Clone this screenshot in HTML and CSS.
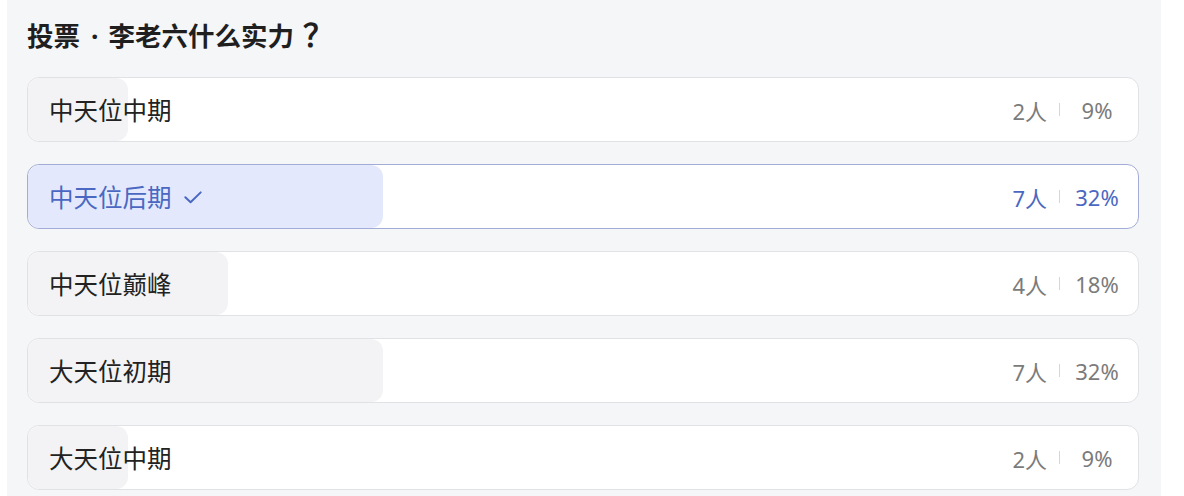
FILE: index.html
```html
<!DOCTYPE html>
<html lang="zh-CN">
<head>
<meta charset="utf-8">
<link rel="stylesheet" href="styles.css">
</head>
<body>
<div class="card">
  <h1 class="title">投票<span class="dot">·</span>李老六什么实力<span class="qm">？</span></h1>
  <div class="options">
    <div class="option">
      <div class="fill" style="width:9%"></div>
      <span class="label">中天位中期</span>
      <span class="stats"><span class="count">2人</span><span class="sep"></span><span class="pct">9%</span></span>
    </div>
    <div class="option selected">
      <div class="fill" style="width:32%"></div>
      <span class="label">中天位后期<svg class="check" viewBox="0 0 20 20" width="22" height="22"><path d="M3 10.2 L7.8 14.8 L17 5.8" fill="none" stroke="currentColor" stroke-width="1.8" stroke-linecap="round" stroke-linejoin="round"/></svg></span>
      <span class="stats"><span class="count">7人</span><span class="sep"></span><span class="pct">32%</span></span>
    </div>
    <div class="option">
      <div class="fill" style="width:18%"></div>
      <span class="label">中天位巅峰</span>
      <span class="stats"><span class="count">4人</span><span class="sep"></span><span class="pct">18%</span></span>
    </div>
    <div class="option">
      <div class="fill" style="width:32%"></div>
      <span class="label">大天位初期</span>
      <span class="stats"><span class="count">7人</span><span class="sep"></span><span class="pct">32%</span></span>
    </div>
    <div class="option">
      <div class="fill" style="width:9%"></div>
      <span class="label">大天位中期</span>
      <span class="stats"><span class="count">2人</span><span class="sep"></span><span class="pct">9%</span></span>
    </div>
  </div>
</div>
</body>
</html>
```

FILE: styles.css
```css
html, body {
  margin: 0;
  padding: 0;
  background: #ffffff;
}
body {
  font-family: "Noto Sans", "Noto Sans CJK SC", sans-serif;
  overflow: hidden;
  height: 496px;
}
.card {
  margin-left: 7px;
  width: 1154px;
  box-sizing: border-box;
  padding: 17px 22px 20px 20px;
  background: #f5f6f8;
  min-height: 520px;
}
.title {
  margin: 0;
  font-size: 26.5px;
  line-height: 36px;
  font-weight: 700;
  color: #1f1f1f;
  font-family: "Noto Sans CJK SC", "Noto Sans", sans-serif;
}
.dot {
  font-family: "Noto Sans", sans-serif;
  margin: 0 10px 0 11px;
}
.qm {
  font-family: "Noto Sans", sans-serif;
  font-size: 31px;
  line-height: 0;
  margin-left: 9px;
}
.options {
  margin-top: 23px;
  display: flex;
  flex-direction: column;
  gap: 22px;
}
.option {
  position: relative;
  height: 65px;
  box-sizing: border-box;
  border: 1px solid #e1e2e6;
  border-radius: 12px;
  background: #ffffff;
  display: flex;
  align-items: center;
  justify-content: space-between;
  padding-left: 21px;
  overflow: hidden;
}
.fill {
  position: absolute;
  left: 0;
  top: 0;
  bottom: 0;
  background: #f3f3f5;
  border-radius: 12px;
}
.label {
  position: relative;
  display: flex;
  align-items: center;
  font-size: 24.5px;
  color: #222222;
  font-family: "Noto Sans CJK SC", sans-serif;
}
.stats {
  position: relative;
  display: flex;
  align-items: center;
  padding-right: 16px;
  font-size: 22px;
  color: #7b7b7b;
}
.count {
  font-family: "Noto Sans", "Noto Sans CJK SC", sans-serif;
}
.sep {
  width: 1px;
  height: 13px;
  background: #d6d6d8;
  margin: 0 12px;
}
.pct {
  width: 50px;
  text-align: center;
}
.selected {
  border-color: #a2acd6;
}
.selected .fill {
  background: #e3e8fc;
}
.selected .label,
.selected .stats {
  color: #4a68c2;
}
.check {
  margin-left: 10px;
}
```
